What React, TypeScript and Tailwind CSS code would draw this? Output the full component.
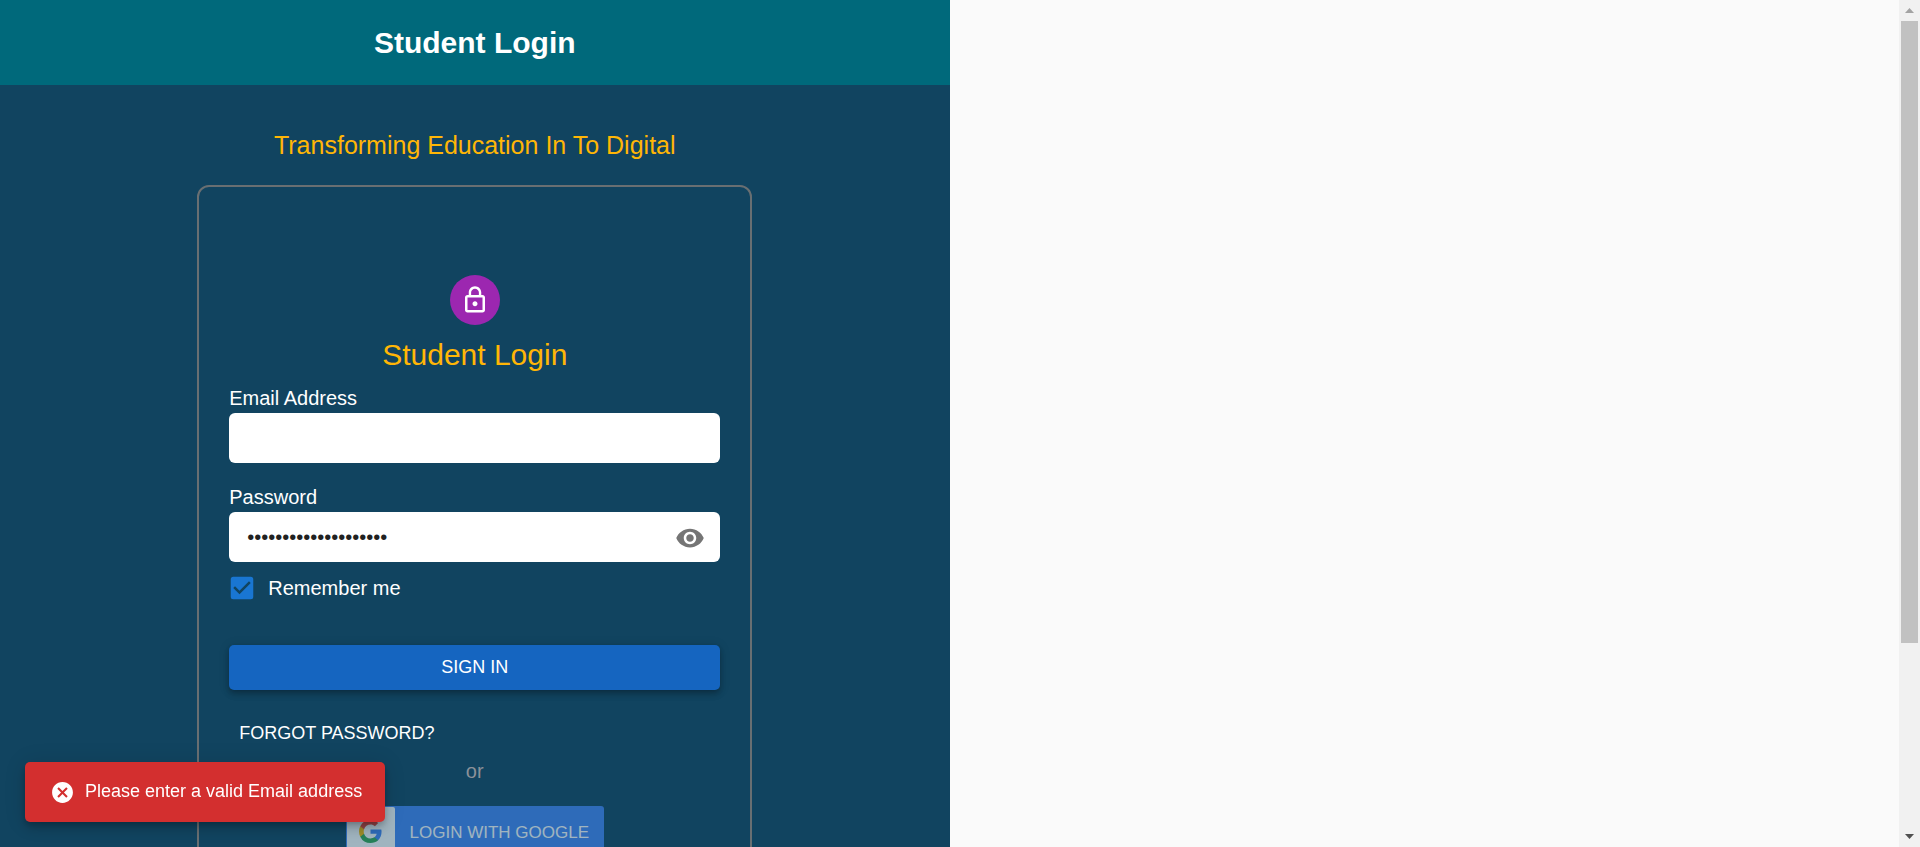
import { useState } from "react";
import { MdCancel, MdCheckBox, MdCheckBoxOutlineBlank, MdLockOutline, MdVisibility } from "react-icons/md";

function GoogleMark() {
  return (
    <svg viewBox="0 0 18 18" className="size-[23px]" aria-hidden="true">
      <path fill="#4285F4" d="M17.64 9.2c0-.637-.057-1.251-.164-1.84H9v3.481h4.844c-.209 1.125-.843 2.078-1.796 2.717v2.258h2.908c1.702-1.567 2.684-3.874 2.684-6.615z" />
      <path fill="#34A853" d="M9 18c2.43 0 4.467-.806 5.956-2.18l-2.908-2.259c-.806.54-1.837.86-3.048.86-2.344 0-4.328-1.584-5.036-3.711H.957v2.332A8.997 8.997 0 0 0 9 18z" />
      <path fill="#FBBC05" d="M3.964 10.71A5.41 5.41 0 0 1 3.682 9c0-.593.102-1.17.282-1.71V4.958H.957A8.996 8.996 0 0 0 0 9c0 1.452.348 2.827.957 4.042l3.007-2.332z" />
      <path fill="#EA4335" d="M9 3.58c1.321 0 2.508.454 3.44 1.345l2.582-2.58C13.463.891 11.426 0 9 0A8.997 8.997 0 0 0 .957 4.958L3.964 7.29C4.672 5.163 6.656 3.58 9 3.58z" />
    </svg>
  );
}

function ScrollTrack() {
  return (
    <div className="flex w-[21px] shrink-0 flex-col items-center bg-[#f1f1f1]" aria-hidden="true">
      <div className="flex h-[21px] shrink-0 items-center justify-center">
        <svg viewBox="0 0 9 5" className="h-[5px] w-[9px]" fill="#a3a3a3">
          <path d="M4.5 0 9 5H0z" />
        </svg>
      </div>
      <div className="w-full grow px-0.5">
        <div className="h-[77.3%] bg-[#c1c1c1]" />
      </div>
      <div className="flex h-[21px] shrink-0 items-center justify-center">
        <svg viewBox="0 0 9 5" className="h-[5px] w-[9px]" fill="#505050">
          <path d="M0 0h9L4.5 5z" />
        </svg>
      </div>
    </div>
  );
}

export default function App() {
  const [email, setEmail] = useState("");
  const [password, setPassword] = useState("studentpassword12345");
  const [visible, setVisible] = useState(false);
  const [remember, setRemember] = useState(true);

  return (
    <div className="flex h-screen overflow-hidden bg-[#fafafa] font-['Liberation_Sans',Arial,sans-serif] text-white">
      <div className="flex min-w-0 grow">
        <main className="w-1/2 bg-[#114460]">
          <header className="flex h-[85px] items-center justify-center bg-[#00697b]">
            <h1 className="text-[30px] font-bold">Student Login</h1>
          </header>

          <div className="flex flex-col items-center pt-10">
            <p className="text-[25px] leading-10 text-[#ffb606]">Transforming Education In To Digital</p>

            <section className="mt-5 flex w-[555px] max-w-full flex-col rounded-xl border-2 border-[#696f72] px-[30px] pt-[88px] pb-10">
              <div className="flex size-[50px] items-center justify-center self-center rounded-full bg-[#9c27b0]">
                <MdLockOutline className="size-[30px]" />
              </div>
              <h2 className="mt-[10px] text-center text-[30px] leading-10 text-[#ffb606]">Student Login</h2>

              <form onSubmit={(e) => e.preventDefault()} className="mt-2 flex flex-col">
                <label htmlFor="email" className="text-xl leading-[30px]">Email Address</label>
                <input
                  id="email"
                  type="text"
                  value={email}
                  onChange={(e) => setEmail(e.target.value)}
                  className="h-[50px] rounded-md bg-white px-[18px] text-xl text-[#212121] outline-none"
                />

                <label htmlFor="password" className="mt-[19px] text-xl leading-[30px]">Password</label>
                <div className="flex h-[50px] items-center rounded-md bg-white pr-[15px] pl-[18px]">
                  <input
                    id="password"
                    type={visible ? "text" : "password"}
                    value={password}
                    onChange={(e) => setPassword(e.target.value)}
                    className="min-w-0 grow bg-transparent text-xl text-[#212121] outline-none"
                  />
                  <button type="button" aria-label="Toggle password visibility" onClick={() => setVisible(!visible)} className="pt-0.5 text-[#757575]">
                    <MdVisibility className="size-[30px]" />
                  </button>
                </div>

                <label className="mt-[11px] flex items-center gap-[11px] self-start text-xl leading-7">
                  <span className="-ml-0.5 grid size-[30px]">
                    <input
                      type="checkbox"
                      checked={remember}
                      onChange={(e) => setRemember(e.target.checked)}
                      className="col-start-1 row-start-1 size-[30px] appearance-none"
                    />
                    {remember ? (
                      <MdCheckBox className="pointer-events-none col-start-1 row-start-1 size-[30px] text-[#1976d2]" />
                    ) : (
                      <MdCheckBoxOutlineBlank className="pointer-events-none col-start-1 row-start-1 size-[30px]" />
                    )}
                  </span>
                  Remember me
                </label>

                <button
                  type="submit"
                  className="mt-[42px] h-[45px] rounded-[5px] bg-[#1565c0] pb-0.5 text-lg shadow-[0_2px_5px_-1px_rgba(0,0,0,0.2),0_5px_6px_rgba(0,0,0,0.14),0_1px_12px_rgba(0,0,0,0.12)]"
                >
                  SIGN IN
                </button>
              </form>

              <a href="#forgot" className="mt-7 ml-[10px] self-start text-lg leading-[30px]">FORGOT PASSWORD?</a>
              <p className="mt-2 text-center text-xl leading-[30px] text-[#8b9199]">or</p>

              <button type="button" className="mt-5 flex items-center self-center rounded-[3px] bg-[#4285f4] p-px pr-[15px] text-[17px] opacity-60">
                <span className="mr-[15px] flex size-12 items-center justify-center rounded-[2px] bg-white">
                  <GoogleMark />
                </span>
                <span className="pt-1">LOGIN WITH GOOGLE</span>
              </button>
            </section>
          </div>
        </main>
      </div>

      <ScrollTrack />

      <div
        role="alert"
        className="fixed bottom-[25px] left-[25px] flex h-[60px] items-center gap-[10px] rounded-[5px] bg-[#d32f2f] pr-[23px] pl-[25px] text-lg shadow-[0_3px_6px_-1px_rgba(0,0,0,0.2),0_7px_12px_rgba(0,0,0,0.14),0_1px_22px_rgba(0,0,0,0.12)]"
      >
        <MdCancel className="size-[25px]" />
        <span className="pb-0.5">Please enter a valid Email address</span>
      </div>
    </div>
  );
}
